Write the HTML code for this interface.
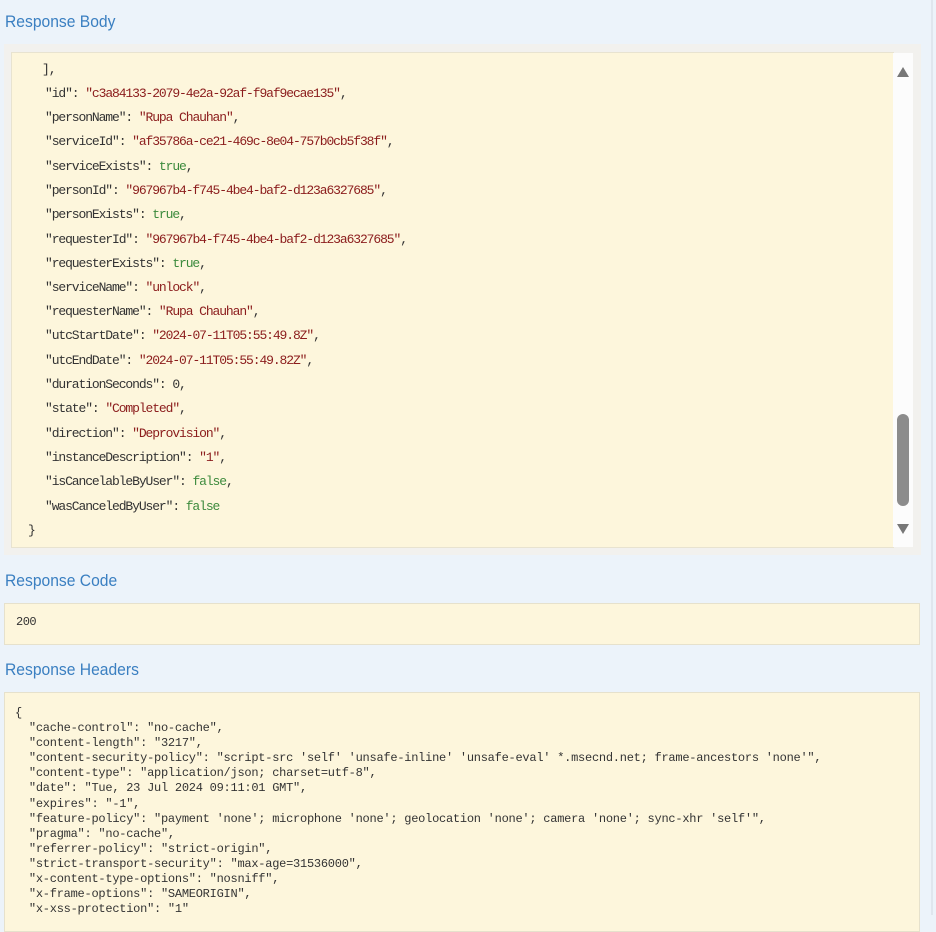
<!DOCTYPE html>
<html><head><style>
html,body{margin:0;padding:0}
body{width:936px;height:915px;background:#ecf3fa;position:relative;overflow:hidden;font-family:"Liberation Sans",sans-serif}
.h{position:absolute;left:5px;color:#3a7fc1;font-size:17px;transform:scaleX(0.92);transform-origin:left}
.frame{position:absolute;left:4px;top:44px;width:917px;height:511px;background:#f2f1ee}
.body{position:absolute;left:12px;top:53px;width:881px;height:494px;background:#fdf6dc;box-shadow:0 0 0 1px #e8e3d0}
.sb{position:absolute;left:893px;top:53px;width:20px;height:494px;background:#fcfcfc}
.thumb{position:absolute;left:897px;top:414px;width:12px;height:92px;background:#8c8c8c;border-radius:6px}
.line{position:absolute;left:30px;font-family:"Liberation Mono",monospace;font-size:13px;letter-spacing:-1.1px;color:#333;white-space:pre;line-height:16px}
.s{color:#8b1c1c}.b{color:#3c8a3c}
.box{position:absolute;left:4px;width:916px;background:#fdf6dc;border:1px solid #e6e1cc;box-sizing:border-box}
.hd{position:absolute;left:15px;top:706px;font-family:"Liberation Mono",monospace;font-size:12px;letter-spacing:-0.25px;line-height:15.1px;color:#333;white-space:pre}
.vl{position:absolute;left:931px;top:0;width:2px;height:915px;background:#dfe6ee}
</style></head><body>
<div class="vl"></div>
<div class="h" style="top:12px">Response Body</div>
<div class="frame"></div>
<div class="body"></div>
<div class="sb"></div>
<svg style="position:absolute;left:896px;top:66px" width="14" height="12"><polygon points="7,1 13,11 1,11" fill="#777"/></svg>
<svg style="position:absolute;left:896px;top:523px" width="14" height="12"><polygon points="1,1 13,1 7,11" fill="#777"/></svg>
<div class="thumb"></div>
<div class="line" style="top:62px;left:42px">],</div>
<div class="line" style="top:86px;left:45px">"id": <span class="s">"c3a84133-2079-4e2a-92af-f9af9ecae135"</span>,</div>
<div class="line" style="top:110px;left:45px">"personName": <span class="s">"Rupa Chauhan"</span>,</div>
<div class="line" style="top:134px;left:45px">"serviceId": <span class="s">"af35786a-ce21-469c-8e04-757b0cb5f38f"</span>,</div>
<div class="line" style="top:159px;left:45px">"serviceExists": <span class="b">true</span>,</div>
<div class="line" style="top:183px;left:45px">"personId": <span class="s">"967967b4-f745-4be4-baf2-d123a6327685"</span>,</div>
<div class="line" style="top:207px;left:45px">"personExists": <span class="b">true</span>,</div>
<div class="line" style="top:232px;left:45px">"requesterId": <span class="s">"967967b4-f745-4be4-baf2-d123a6327685"</span>,</div>
<div class="line" style="top:256px;left:45px">"requesterExists": <span class="b">true</span>,</div>
<div class="line" style="top:280px;left:45px">"serviceName": <span class="s">"unlock"</span>,</div>
<div class="line" style="top:304px;left:45px">"requesterName": <span class="s">"Rupa Chauhan"</span>,</div>
<div class="line" style="top:328px;left:45px">"utcStartDate": <span class="s">"2024-07-11T05:55:49.8Z"</span>,</div>
<div class="line" style="top:353px;left:45px">"utcEndDate": <span class="s">"2024-07-11T05:55:49.82Z"</span>,</div>
<div class="line" style="top:377px;left:45px">"durationSeconds": 0,</div>
<div class="line" style="top:401px;left:45px">"state": <span class="s">"Completed"</span>,</div>
<div class="line" style="top:426px;left:45px">"direction": <span class="s">"Deprovision"</span>,</div>
<div class="line" style="top:450px;left:45px">"instanceDescription": <span class="s">"1"</span>,</div>
<div class="line" style="top:474px;left:45px">"isCancelableByUser": <span class="b">false</span>,</div>
<div class="line" style="top:499px;left:45px">"wasCanceledByUser": <span class="b">false</span></div>
<div class="line" style="top:523px;left:28px">}</div>
<div class="h" style="top:571px">Response Code</div>
<div class="box" style="top:603px;height:42px"></div>
<div class="line" style="top:614px;left:16px;font-size:12px;letter-spacing:-0.5px">200</div>
<div class="h" style="top:660px">Response Headers</div>
<div class="box" style="top:692px;height:240px"></div>
<div class="hd">{
  "cache-control": "no-cache",
  "content-length": "3217",
  "content-security-policy": "script-src 'self' 'unsafe-inline' 'unsafe-eval' *.msecnd.net; frame-ancestors 'none'",
  "content-type": "application/json; charset=utf-8",
  "date": "Tue, 23 Jul 2024 09:11:01 GMT",
  "expires": "-1",
  "feature-policy": "payment 'none'; microphone 'none'; geolocation 'none'; camera 'none'; sync-xhr 'self'",
  "pragma": "no-cache",
  "referrer-policy": "strict-origin",
  "strict-transport-security": "max-age=31536000",
  "x-content-type-options": "nosniff",
  "x-frame-options": "SAMEORIGIN",
  "x-xss-protection": "1"</div>
</body></html>
